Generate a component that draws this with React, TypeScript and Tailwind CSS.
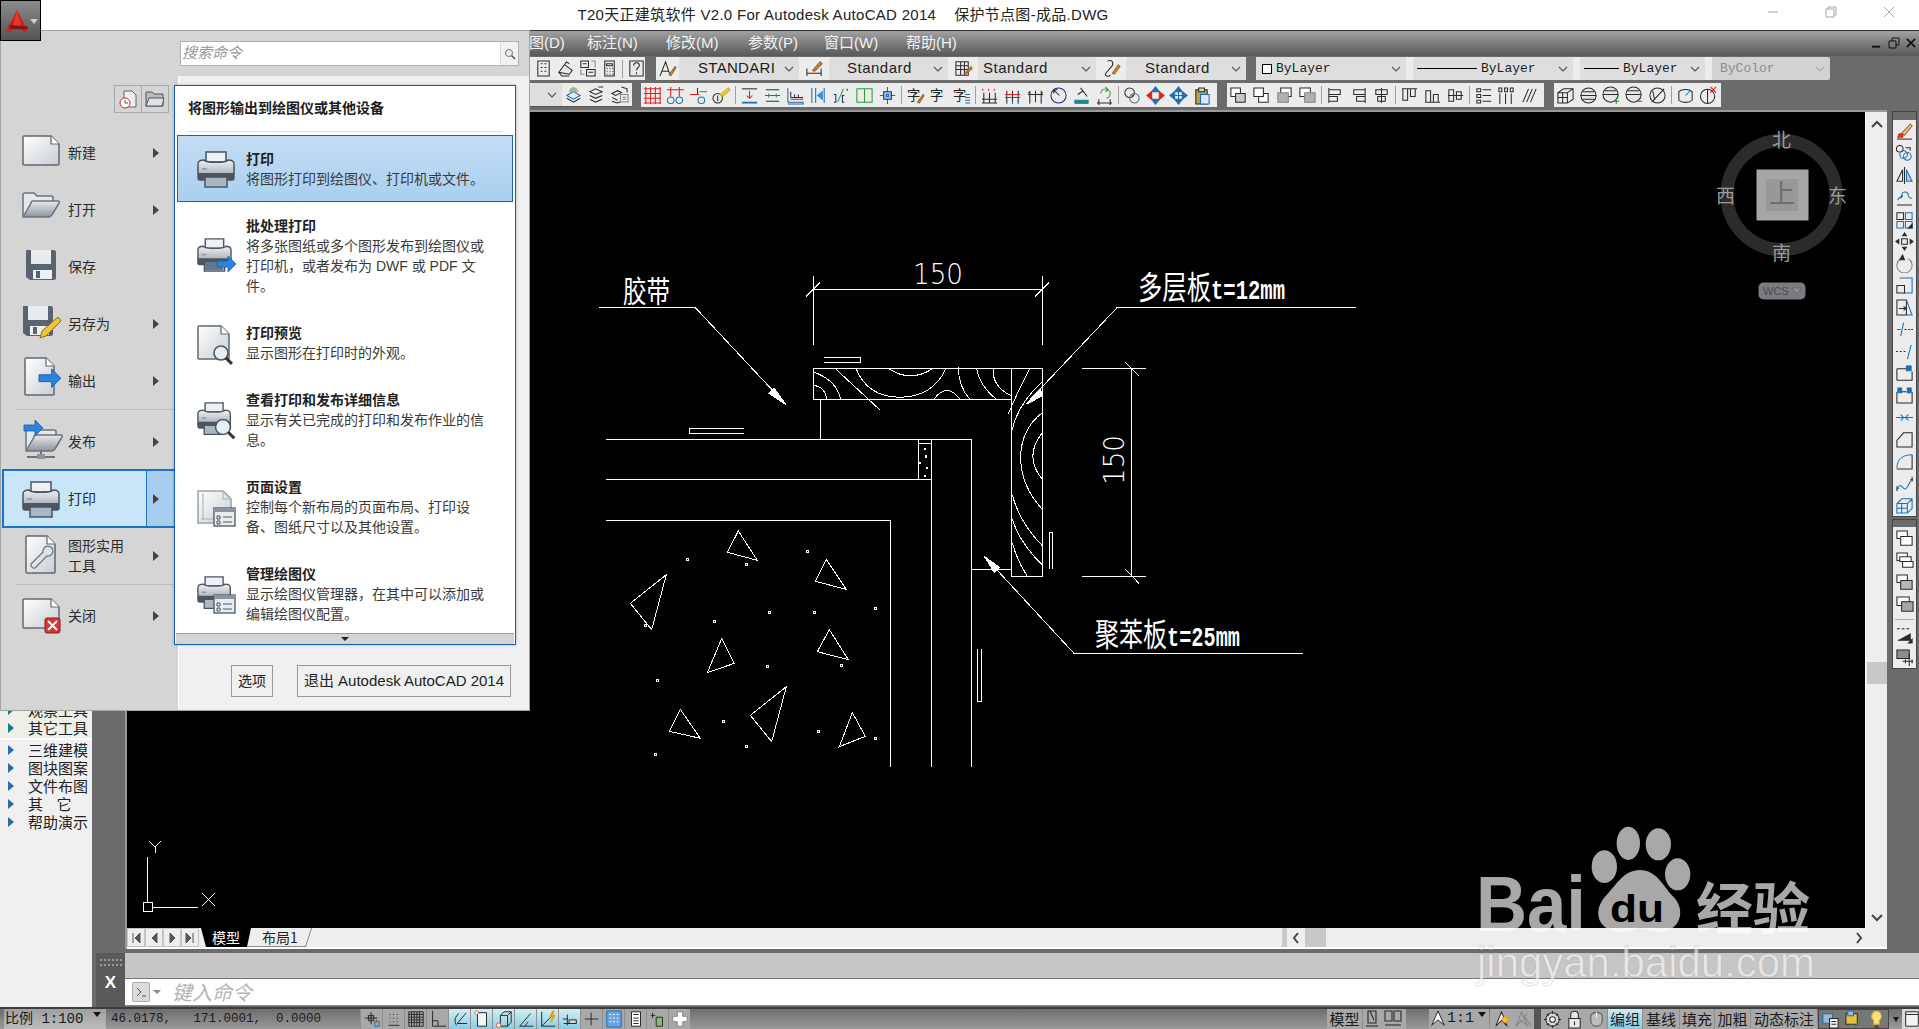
import type { ReactNode } from 'react'

type Part = [string, string, string?]
type Ico = { p: Part[]; t?: string }

const K = '#2b2b2b'
const B = '#1b6fb5'
const R = '#e0201b'
const G = '#2a9a3a'
const Y = '#d9a520'
const S = '#7d8790'

const c = (x: number, y: number, r: number) =>
  `M${x - r} ${y}a${r} ${r} 0 1 0 ${2 * r} 0a${r} ${r} 0 1 0 ${-2 * r} 0`

const icons: Record<string, Ico> = {
  keys: { p: [[K, 'M4 2h12v16H4zM7 5h2M11 5h2M7 9h2M11 9h2M7 13h2M11 13h2']] },
  stamp: { p: [[K, 'M3 14l6-8 8 6-3 4zM3 14l3 4h8M9 6l2-3 3 2']] },
  forms: { p: [[K, 'M3 2h8v7H3zM5 5h4M9 11h9v7H9zM11 14h5'], [S, 'M3 11v5h4M14 2h4v7']] },
  calc: { p: [[K, 'M5 2h10v16H5zM7 5h6v2H7zM7 10h1M10 10h1M13 10h1M7 13h1M10 13h1M13 13h1M7 16h1M10 16h1M13 16h1']] },
  help: { p: [[K, 'M3 2h14v16H3zM7 7c0-4 6-4 6 0 0 2-3 2-3 5M10 14v2']] },
  textStyle: { p: [[K, 'M2 18L8 3l5 15M4 13h7'], ['#a0662a', 'M12 16l6-8 1 1-5 8z', '#c98a3d']] },
  dimStyle: { p: [[K, 'M2 10v8M17 10v8M2 15h15'], ['#a0662a', 'M8 12l8-9 2 2-8 8z', '#c98a3d']] },
  tableStyle: { p: [[K, 'M2 3h13v14H2zM2 7h13M2 11h13M7 3v14M11 3v14'], ['#a0662a', 'M11 15l7-7 1 2-7 6z', '#c98a3d']] },
  mlStyle: { p: [[K, 'M6 2c6-2 7 4 3 7l-5 6c-2 3 3 4 5 2'], ['#a0662a', 'M11 15l6-9 2 2-6 8z', '#c98a3d']] },
  layers: { p: [[B, 'M3 11l7-4 7 4-7 4z'], [K, 'M3 14l7 4 7-4'], [Y, 'M6 7a4 4 0 1 1 8 0z', '#8fb5d8']] },
  stack1: { p: [[K, 'M3 7l6-3 7 3-7 3zM3 11l6 3 7-3M3 15l6 3 7-3M12 2h5']] },
  stack2: { p: [[K, 'M2 9l6-3 4 2-6 3zM2 13l6 3M2 17l6 2 3-1M12 2l6 2v4'], [S, 'M11 10h8v8h-8zM13 13h4M13 15h4']] },
  grid: { p: [[R, 'M1 3h18M1 8h18M1 13h18M1 18h18M3 1v18M8 1v18M13 1v18M18 1v18']] },
  tees: { p: [[R, 'M1 4h18M5 1v10M14 1v10'], [B, c(5, 15, 3.5)], [B, c(14, 15, 3.5)]] },
  tee: { p: [[K, 'M9 2v7'], [R, 'M1 9h10'], [G, 'M11 6h8'], [B, c(13, 15, 3.5)]] },
  numPen: { p: [[K, c(6, 13, 5)], [K, 'M6 10v6'], [Y, 'M9 9l8-7 2 2-8 7z', '#f2d24b']] },
  beamIns: { p: [[K, 'M2 3h16', K], [R, 'M10 5v8M7 10l3 3 3-3'], [B, 'M2 17h16M2 18h16']] },
  beamEq: { p: [['#16307a', 'M3 4h14M3 16h14'], [R, 'M2 10h16'], [G, 'M6 8v4M14 8v4']] },
  stair: { p: [[B, 'M2 2v15h16v2H2'], [K, 'M5 12h13M5 12V6M9 9v3M13 9v3'], [R, 'M5 14h13']] },
  colArrow: { p: [[B, 'M3 2v16M7 2v16M16 2v16'], ['#3a8fd8', 'M9 10l5-4v8z', '#3a8fd8']] },
  bracket: { p: [['#16307a', 'M2 9h2v8H2M13 10h-2v7h2'], [G, 'M6 17L12 3'], [K, 'M16 3v2']] },
  splitBox: { p: [[G, 'M2 3h16v14H2zM10 3v14']] },
  crossBox: { p: [[R, 'M10 1v18M2 10h16'], ['#16307a', 'M6 6h8v8H6z', '#a9bfe0'], [B, 'M9 9h2v2H9z']] },
  zipen: { t: '字', p: [['#a0662a', 'M12 17l6-8 1 1-5 8z', '#c98a3d']] },
  zi: { t: '字', p: [] },
  ziLines: { t: '字', p: [[B, 'M14 9h5M14 12h5M14 15h5M14 18h5']] },
  tick1: { p: [[R, 'M3 3v2M9 3v2M15 3v2'], [K, 'M2 18h16M4 7v11M10 7v11M16 7v11M2 14h16']] },
  tick2: { p: [[K, 'M4 5v12M10 5v12M16 5v12'], [R, 'M2 9h16M2 12h16'], [B, 'M4 16v3M10 16v3M16 16v3']] },
  tick3: { p: [[K, 'M4 5v12M10 5v12M16 5v12M2 9h16M2 7h2M16 7h2'], [B, 'M4 16v3M16 16v3']] },
  clock: { p: [['#16307a', c(10, 10, 8)], [K, 'M5 4l6 6M5 4h4M5 4v4']] },
  scope: { p: [[K, 'M9 2l7 9M6 9l6-4M3 18h14'], ['#1a8a8a', 'M3 15h14v3H3z', '#1a8a8a']] },
  swap: { p: [[G, 'M6 8a5 5 0 1 1 6 5M11 1l3 3-3 2'], [K, 'M2 18h16M4 14v6M16 14v6']] },
  chain: { p: [[K, c(7, 7, 5)], ['#58707f', c(12, 13, 5)], [B, 'M9 9l2 2']] },
  moveRed: { p: [[B, 'M10 1l-4 5h8zM10 19l-4-5h8z', B], [R, 'M1 10l5-4v8zM19 10l-5-4v8z', R]] },
  moveBlue: { p: [[B, 'M10 1l-4 5h8zM10 19l-4-5h8zM1 10l5-4v8zM19 10l-5-4v8zM10 5v10M5 10h10', B]] },
  clip: { p: [[K, 'M4 4h12v15H4z', '#b6a24a'], [K, 'M7 2h6v4H7z', '#d8d8c0'], [B, 'M9 9h9v10H9z', '#dfe8f4']] },
  ord1: { p: [[K, 'M2 2h10v9H2z', '#fff'], [K, 'M7 8h10v9H7z', '#c8c8c8']] },
  ord2: { p: [[K, 'M7 8h10v9H7z', '#fff'], [K, 'M2 2h10v9H2z', '#fff']] },
  ord3: { p: [[K, 'M6 2h11v9H6z', '#fff'], [S, 'M3 7h11v10H3z', '#b0b0b0']] },
  ord4: { p: [[K, 'M2 2h11v9H2z', '#fff'], [S, 'M7 7h11v10H7z', '#b0b0b0']] },
  al1: { p: [[K, 'M3 2v16M3 4h12v5H3M3 11h9v5H3']] },
  al2: { p: [[K, 'M17 2v16M17 4H5v5h12M17 11H8v5h9']] },
  al3: { p: [[K, 'M10 2v16M4 4h12v5H4zM6 11h8v5H6z']] },
  al4: { p: [[K, 'M2 3h16M3 3v12h5V3M11 3v8h5V3']] },
  al5: { p: [[K, 'M2 17h16M3 17V5h5v12M11 17V9h5v8']] },
  al6: { p: [[K, 'M2 10h16M3 4h5v12H3zM11 6h5v8h-5z']] },
  dist1: { p: [[K, 'M3 3h4v3H3zM3 9h4v3H3zM3 15h4v3H3zM9 4h9M9 10h9M9 16h9']] },
  dist2: { p: [[K, 'M2 2h3v4H2zM8 2h3v4H8zM14 2h3v4h-3zM3 8v11M9 8v11M15 8v11']] },
  slash: { p: [[K, 'M3 17L9 3M7 17l6-14M11 17l6-14']] },
  cube: { p: [[K, 'M2 7l6-4h10v11l-6 4H2zM2 7h10v11M12 7l6-4M7 7v11M2 12h10']] },
  sph: { p: [[K, c(10, 10, 8), '#e6e6e6'], [K, 'M2 10h16M4 6h12M4 14h12']] },
  sphP: { p: [[K, c(9, 9, 8), '#e6e6e6'], [K, 'M1 9h16M3 5h12'], [G, 'M15 13v6M12 16h6']] },
  sphM: { p: [[K, c(9, 9, 8), '#e6e6e6'], [K, 'M1 9h16M3 5h12'], [R, 'M12 16h6']] },
  sphS: { p: [[K, c(10, 10, 8)], [K, 'M4 17L17 3M5 5l2 10']] },
  cyl: { p: [[K, 'M3 6c3-3 11-3 14 0v9c-3 3-11 3-14 0z'], [B, 'M10 10l5-5']] },
  cylX: { p: [[K, c(9, 11, 7.5)], [K, 'M9 4v15'], [R, 'M12 1l6 6M18 1l-6 6']] },
  brush: { p: [['#a0662a', 'M7 12l9-10 2 2-8 10z', '#e9c48a'], [R, 'M4 13c3-2 5 0 4 3H3z', '#d2491c'], [K, 'M2 18h16']] },
  copyObj: { p: [[K, c(5, 5, 3.5)], [B, c(13, 13, 4)], [B, c(9, 11, 4)], [K, 'M11 4h5v3']] },
  mirror: { p: [[K, 'M10 1v18M8 16H2L8 4z'], [B, 'M12 16h6L12 4z', '#a9cdef']] },
  offset: { p: [[B, 'M3 13c0-4 4-2 4-5 0-5 7-5 7 0 0 3 3 2 4 3'], [K, 'M2 18h16M6 11c0-3 2-1 2-3']] },
  array: { p: [[K, 'M2 3h7v7H2z'], [B, 'M11 3h7v7h-7zM2 12h7v7H2zM11 12h7v7h-7z'], [K, 'M14 19l4-4v4z', K]] },
  move4: { p: [[K, 'M10 1l-2 3h4zM10 19l-2-3h4zM1 10l3-2v4zM19 10l-3-2v4z', K], [K, 'M7 7h6v6H7z']] },
  rotate: { p: [[S, 'M6 5a8 8 0 1 0 8 0'], [K, 'M8 1l2 5-5 0z', K]] },
  scale: { p: [[B, 'M5 2h13v16H10'], [K, 'M2 10h8v8H2z']] },
  stretch: { p: [[K, 'M2 2h10v16H2zM4 11h8M9 9l3 2-3 2'], [B, 'M12 2l6 16h-6']] },
  trim: { p: [[B, 'M2 10h4M9 3L6 17'], [K, 'M10 10h2M14 10h2M17 10h2']] },
  extend: { p: [[K, 'M1 10h2M5 10h2M9 10h2'], [B, 'M17 3l-4 15']] },
  brk1: { p: [[K, 'M2 5h12M2 5v12M2 17h16V8'], [B, 'M12 2h5v5h-5z', B]] },
  brk2: { p: [[K, 'M2 6v12h16V6M7 6h5'], [B, 'M3 2h4v5H3zM13 2h4v5h-4z', B]] },
  join: { p: [[B, 'M1 10h18M6 7l3 3-3 3M14 7l-3 3 3 3']] },
  chamfer: { p: [[K, 'M2 18h16V3H9l-7 8z']] },
  fillet: { p: [[B, 'M2 17C2 8 8 3 18 3'], [K, 'M2 18h16V3']] },
  spline: { p: [[K, 'M2 13v5M18 3v5M2 15h2M16 6h3'], [B, 'M3 15c3-8 6 4 9 0s3-6 5-8']] },
  solid: { p: [[B, 'M2 8l5-5h11v10l-5 5H2zM2 8h11v10M13 8l5-5M7 8v10M2 13h11']] },
  win1: { p: [[K, 'M2 2h11v8H2z', '#fff'], [K, 'M6 8h12v9H6z', '#fff']] },
  win2: { p: [[K, 'M2 2h11v8H2z', '#fff'], [K, 'M5 6h12v5H5z', '#fff'], [K, 'M8 11h11v6H8z', '#fff']] },
  win3: { p: [[K, 'M2 2h11v8H2z', '#fff'], [K, 'M6 8h12v9H6z', '#b7b7b7']] },
  win4: { p: [[K, 'M2 2h13v9H2z', '#fff'], [K, 'M7 7h12v10H7z', '#a6a6a6']] },
  abc: { p: [[K, 'M2 3h3M7 3h3M12 3h3'], [K, 'M3 15h13v-7M14 18l4-4v4z', K]] },
  ruler: { p: [[K, 'M2 2h13v9H2z', '#8e8e8e'], [K, 'M8 14h11M15 6v13M11 12v4M18 12v4']] },
  snap: { p: [[K, 'M9 2v14M2 9h14M6 6h6v6H6z', '#8a8a8a'], [B, 'M13 13h5v5h-5z'], [R, 'M15 11v2']] },
  dots: { p: [[K, 'M5 5h1M9 5h1M13 5h1M5 9h1M9 9h1M13 9h1M5 13h1M9 13h1M13 13h1M4 17h12']] },
  hatch: { p: [[K, 'M2 2h16v16H2zM2 5h16M2 8h16M2 11h16M2 14h16M5 2v16M8 2v16M11 2v16M14 2v16']] },
  ortho: { p: [[K, 'M4 1v17h15M4 12h6v6']] },
  polar: { p: [[K, 'M6 17a9 9 0 0 1 3-13M17 3L7 15h11']] },
  isoA: { p: [[K, 'M5 3h10v15H5z', '#f4f4f4'], ['#e2662a', c(4, 3, 2), '#fff']] },
  isoB: { p: [[K, 'M6 6l4-4h8v12l-4 4H6zM6 6h8v12M14 6l4-4'], ['#e2662a', c(4, 17, 2.5), '#fff']] },
  ang: { p: [[K, 'M3 18h15M3 18L15 4M9 18l3-5']] },
  lightning: { p: [[K, 'M3 2v16h15M3 18L14 7'], [Y, 'M15 1l-3 7h3l-2 6 5-8h-3l2-5z', Y]] },
  plusT: { p: [[K, 'M7 5v12M2 10h6M3 15h14'], [K, 'M9 11h8v4H9z', '#dcdcdc']] },
  plusB: { p: [[K, 'M9 3v14M2 10h15', K]] },
  screen: { p: [[B, 'M2 1h16v18H2z', '#6aa3e0'], ['#ffffff', 'M5 5h2M9 5h2M13 5h2M5 9h2M9 9h2M13 9h2M5 13h2M9 13h2M13 13h2']] },
  calcS: { p: [[K, 'M5 2h10v16H5z', '#fff'], [K, 'M7 5h6M7 9h6M7 12h6M7 15h6']] },
  sel: { p: [[K, 'M2 6h5M4 3v6'], [K, 'M8 8h7v10H8z', '#7fbf6a']] },
  plusL: { p: [[S, 'M7 2h6v5h5v6h-5v5H7v-5H2V7h5z', '#fff']] },
  paper: { p: [[K, 'M5 2l8 0v12H5zM7 2l4 9'], [K, 'M3 17h12', K]] },
  twoVp: { p: [[K, 'M2 2h7v10H2zM11 2h7v10h-7z'], [K, 'M2 16h16', K]] },
  anno1: { p: [[K, 'M10 2l-6 15 6-6 6 6z', '#fff'], ['#e89a1a', c(14, 10, 3), '#f4c430']] },
  anno2: { p: [[S, 'M8 2l-6 15 6-6 6 6zM14 4l-3 3 7 10']] },
  anno3: { p: [[K, 'M10 1l-7 16 7-6 7 6z', '#fff']] },
  gear: { p: [[K, c(10, 10, 7), '#d8d8d8'], [K, c(10, 10, 3), '#fff'], [K, 'M10 1v3M10 16v3M1 10h3M16 10h3M4 4l2 2M14 14l2 2M16 4l-2 2M4 16l2-2']] },
  lock: { p: [[K, 'M6 9V5c0-5 8-5 8 0v4M4 9h12v10H4zM10 12v4', '#e8e8e8']] },
  mouse: { p: [['#555', 'M4 7c0-6 12-6 12 0v4c0 8-12 8-12 0z', '#bdbdbd'], ['#fff', 'M10 2v6']] },
  tray1: { p: [[B, 'M2 4h10v10H2z', '#9cb8d8'], [K, 'M9 9h9v10H9zM11 12h5M11 15h5', '#eee']] },
  tray2: { p: [[K, 'M2 4h12v11H2z', '#e8c040'], [G, 'M8 15l3 3 7-8'], [B, 'M4 1h6v5H4z', '#9cb8d8']] },
  tray3: { p: [[Y, 'M10 1c-5 0-7 7-3 10v4h6v-4c4-3 2-10-3-10z', '#f6e27a'], [K, 'M8 17h4M8 19h4']] },
  window: { p: [[K, 'M3 2h14v16H3zM3 5h14', '#f4f4f4']] },
}

function Glyph({ name, size = 20 }: { name: string; size?: number }) {
  const ico = icons[name]
  return (
    <svg viewBox="0 0 20 20" width={size} height={size} className="block shrink-0">
      {ico.t && (
        <text x="1" y="15" fontSize="14" fill="#222" fontFamily="'Noto Sans CJK SC',sans-serif">
          {ico.t}
        </text>
      )}
      {ico.p.map((part, i) => (
        <path key={i} d={part[1]} stroke={part[0]} strokeWidth="1.1" fill={part[2] ?? 'none'} />
      ))}
    </svg>
  )
}

function Chevron({ className = 'text-[#555]' }: { className?: string }) {
  return (
    <svg viewBox="0 0 10 6" className={`w-[10px] h-[6px] shrink-0 ${className}`}>
      <path d="M1 1l4 4 4-4" fill="none" stroke="currentColor" strokeWidth="1.1" />
    </svg>
  )
}

// one group of toolbar buttons, "|" is a thin separator
function IconRun({ names, w = 'w-[23px]' }: { names: string[]; w?: string }) {
  return (
    <>
      {names.map((n, i) =>
        n === '|' ? (
          <span key={i} className="w-px h-[18px] mx-[2px] bg-[#a0a0a0] shrink-0" />
        ) : (
          <span key={i} className={`${w} h-full flex items-center justify-center shrink-0`}>
            <Glyph name={n} size={19} />
          </span>
        ),
      )}
    </>
  )
}

function Gripper({ w }: { w: string }) {
  return <span className={`${w} h-full shrink-0`} />
}

function Combo({ w, children, disabled }: { w: string; children: ReactNode; disabled?: boolean }) {
  return (
    <div
      className={`${w} h-full shrink-0 flex items-center justify-between pr-[5px] rounded-[2px] text-[15px] ${
        disabled ? 'bg-[#d2d2d2] text-[#8d8d8d]' : 'bg-[#dedede] text-[#1c1c1c]'
      }`}
    >
      <div className="flex items-center min-w-0 whitespace-nowrap overflow-hidden">{children}</div>
      <Chevron className={disabled ? 'text-[#aaa]' : 'text-[#555]'} />
    </div>
  )
}

function TitleBar() {
  return (
    <div className="h-[30px] shrink-0 bg-white relative flex items-center justify-center text-[15px] tracking-[0.3px] text-[#222] pr-[233px]">
      <span className="whitespace-pre">T20天正建筑软件 V2.0 For Autodesk AutoCAD 2014    保护节点图-成品.DWG</span>
      <div className="absolute right-[24px] top-[6px] flex gap-[46px] text-[#a8a8a8]">
        <svg viewBox="0 0 12 12" className="w-[12px] h-[12px]">
          <path d="M1 6h10" stroke="currentColor" />
        </svg>
        <svg viewBox="0 0 12 12" className="w-[12px] h-[12px]">
          <path d="M1 3h8v8H1zM3 3V1h8v8H9" stroke="currentColor" fill="none" />
        </svg>
        <svg viewBox="0 0 12 12" className="w-[12px] h-[12px]">
          <path d="M1 1l10 10M11 1L1 11" stroke="currentColor" />
        </svg>
      </div>
    </div>
  )
}

function MenuBar() {
  const items: [string, string][] = [
    ['图(D)', 'w-[58px]'],
    ['标注(N)', 'w-[79px]'],
    ['修改(M)', 'w-[82px]'],
    ['参数(P)', 'w-[76px]'],
    ['窗口(W)', 'w-[82px]'],
    ['帮助(H)', 'w-[70px]'],
  ]
  return (
    <div className="h-[26px] shrink-0 border-t border-[#333] bg-linear-to-b from-[#a2a2a2] to-[#585858] flex items-center pl-[529px] text-[15px] text-[#f2f2f2] relative">
      {items.map(([label, w]) => (
        <span key={label} className={`${w} shrink-0 whitespace-nowrap`}>
          {label}
        </span>
      ))}
      <div className="absolute right-[3px] top-[5px] flex gap-[6px] text-[#111]">
        <svg viewBox="0 0 12 12" className="w-[11px] h-[14px]">
          <path d="M1 10h9" stroke="currentColor" strokeWidth="2" />
        </svg>
        <svg viewBox="0 0 12 12" className="w-[12px] h-[14px]">
          <path d="M1 4h7v7H1zM4 4V1h7v7H8" stroke="currentColor" fill="none" />
        </svg>
        <svg viewBox="0 0 12 12" className="w-[10px] h-[14px]">
          <path d="M1 1l10 10M11 1L1 11" stroke="currentColor" strokeWidth="2" />
        </svg>
      </div>
    </div>
  )
}

function Toolbars() {
  const barCls = 'h-full flex items-center bg-[#ececec] shrink-0'
  return (
    <div className="shrink-0 h-[54px] flex flex-col pt-px bg-[#6b6b6b] font-['Liberation_Sans','Noto_Sans_CJK_SC',sans-serif]">
      <div className="h-[23px] flex pl-[530px]">
        <div className={`${barCls} w-[115px] pl-[2px]`}>
          <IconRun names={['keys', 'stamp', 'forms', 'calc', '|', 'help']} w="w-[22px]" />
        </div>
        <Gripper w="w-[11px]" />
        <div className={`${barCls} w-[590px]`}>
          <IconRun names={['textStyle']} />
          <Combo w="w-[120px]">
            <span className="pl-[19px] tracking-[0.3px]">STANDARI</span>
          </Combo>
          <span className="w-[30px] flex justify-center shrink-0">
            <Glyph name="dimStyle" size={19} />
          </span>
          <Combo w="w-[119px]">
            <span className="pl-[18px] tracking-[0.5px]">Standard</span>
          </Combo>
          <span className="w-[30px] flex justify-center shrink-0">
            <Glyph name="tableStyle" size={19} />
          </span>
          <Combo w="w-[118px]">
            <span className="pl-[5px] tracking-[0.5px]">Standard</span>
          </Combo>
          <span className="w-[30px] flex justify-center shrink-0">
            <Glyph name="mlStyle" size={19} />
          </span>
          <Combo w="w-[120px]">
            <span className="pl-[19px] tracking-[0.5px]">Standard</span>
          </Combo>
        </div>
        <Gripper w="w-[10px]" />
        <div className={`${barCls} w-[572px] gap-[7px] bg-[#cfcfcf]`}>
          <Combo w="w-[150px]">
            <span className="ml-[6px] mr-[4px] w-[10px] h-[10px] border border-black bg-white" />
            <span className="font-['Liberation_Mono'] text-[13px]">ByLayer</span>
          </Combo>
          <Combo w="w-[160px]">
            <span className="ml-[4px] mr-[4px] w-[60px] h-px bg-black" />
            <span className="font-['Liberation_Mono'] text-[13px]">ByLayer</span>
          </Combo>
          <Combo w="w-[125px]">
            <span className="ml-[4px] mr-[4px] w-[35px] h-px bg-black" />
            <span className="font-['Liberation_Mono'] text-[13px]">ByLayer</span>
          </Combo>
          <Combo w="w-[118px]" disabled>
            <span className="pl-[8px] font-['Liberation_Mono'] text-[13px]">ByColor</span>
          </Combo>
        </div>
      </div>
      <div className="h-[24px] mt-[3px] flex pl-[530px]">
        <div className={`${barCls} w-[102px] border-b border-[#555]`}>
          <div className="w-[32px] h-full bg-[#dedede] flex items-center justify-end pr-[5px] shrink-0">
            <Chevron />
          </div>
          <IconRun names={['layers', 'stack1', 'stack2']} />
        </div>
        <Gripper w="w-[9px]" />
        <div className={`${barCls} w-[576px]`}>
          <IconRun
            names={[
              'grid', 'tees', 'tee', 'numPen', '|',
              'beamIns', 'beamEq', 'stair', 'colArrow', 'bracket', 'splitBox', 'crossBox', '|',
              'zipen', 'zi', 'ziLines', '|',
              'tick1', 'tick2', 'tick3', 'clock', 'scope', 'swap', '|',
              'chain', 'moveRed', 'moveBlue', 'clip',
            ]}
          />
        </div>
        <Gripper w="w-[10px]" />
        <div className={`${barCls} w-[317px]`}>
          <IconRun
            names={['ord1', 'ord2', 'ord3', 'ord4', '|', 'al1', 'al2', 'al3', '|', 'al4', 'al5', 'al6', '|', 'dist1', 'dist2', 'slash']}
          />
        </div>
        <Gripper w="w-[10px]" />
        <div className={`${barCls} w-[167px]`}>
          <IconRun names={['cube', 'sph', 'sphP', 'sphM', 'sphS', '|', 'cyl', 'cylX']} />
        </div>
      </div>
    </div>
  )
}

function LeftPanel() {
  const top = ['观察工具', '其它工具']
  const rest = ['三维建模', '图块图案', '文件布图', '其    它', '帮助演示']
  const row = (label: string, color: string) => (
    <div key={label} className="h-[18px] flex items-center text-[15px] text-[#222] whitespace-pre">
      <svg viewBox="0 0 6 10" className="w-[6px] h-[10px] ml-[8px] mr-[14px] shrink-0">
        <path d="M0 0l6 5-6 5z" fill={color} />
      </svg>
      {label}
    </div>
  )
  return (
    <div className="w-[92px] h-full bg-[#f0f0f0] shrink-0 pt-[591px] font-['Noto_Sans_CJK_SC',sans-serif]">
      <div className="pb-px border-b-2 border-[#fafafa] bg-[#eeefe9]">{top.map(t => row(t, '#0f7f7f'))}</div>
      <div className="pt-px">{rest.map(t => row(t, '#2f6aa5'))}</div>
    </div>
  )
}

const Line = ({ d }: { d: string }) => <path d={d} vectorEffect="non-scaling-stroke" />

function Drawing() {
  const tris = [
    '445,153 412,217 502,241',
    '229,284 121,370 185,449',
    '709,238 676,304 769,328',
    '395,476 352,578 433,550',
    '718,449 682,515 775,539',
    '589,620 481,706 545,785',
    '271,688 238,754 331,775',
    '787,698 748,800 826,769',
  ]
  const dots = [
    [292, 238], [469, 255], [652, 214], [168, 436], [373, 424], [538, 397], [673, 397], [856, 385],
    [532, 561], [754, 556], [202, 601], [400, 726], [685, 754], [856, 777], [469, 800], [196, 823],
  ]
  const cad = "'Noto Sans CJK SC',sans-serif"
  const dimFont = "'DejaVu Sans',sans-serif"
  const mono = "'Liberation Mono',monospace"
  return (
    <svg viewBox="127 112 1738 816" className="block w-[1738px] h-[816px] bg-black">
      <g shapeRendering="crispEdges" fill="none" stroke="#fff" strokeWidth="1">
        <g transform="translate(590 240) scale(.33333)">
          <Line d="M27 202H315L587 493" />
          <Line d="M670 108V314M1357 108V314M670 148H1357M648 170L690 127M1335 170L1377 127" />
          <Line d="M670 385H1357V1009H1264V385M670 385V478H1264M691 478V598M48 598H1145V1580M48 718H1024M985 598V718M985 610H1024M1024 598V1580" />
          <Line d="M48 841H902V1580M1145 988H1264" />
          <Line d="M812 354H702M702 368H812V354M462 567H300V581H462" />
          <Line d="M1378 987V877H1388V987" />
          <Line d="M1164 1227V1385H1175V1227" />
          <Line d="M670 396Q740 420 752 478M670 436Q705 440 710 478M735 385L870 510" />
          <Line d="M798 385Q830 470 930 472Q1030 470 1068 385M895 385Q960 430 1030 385M1032 478Q1070 425 1110 478" />
          <Line d="M1105 380Q1105 440 1140 478M1160 385Q1170 440 1220 478M1210 385Q1205 440 1265 468" />
          <Line d="M1320 385Q1285 450 1255 522M1357 425Q1285 490 1266 570M1357 518Q1290 570 1292 660Q1295 740 1357 808M1357 578Q1300 650 1357 718" />
          <Line d="M1267 765Q1290 850 1357 917M1267 838Q1290 910 1357 975M1267 908Q1280 960 1312 1009" />
          <Line d="M2298 202H1582L1308 492M2138 1240H1452L1183 949" />
          <Line d="M1476 385H1667M1476 1009H1667M1625 385V1009M1605 366L1647 408M1605 987L1647 1030" />
          <path d="M587 493L537 460L553 445ZM1310 493L1352 445L1355 468ZM1183 949L1228 982L1213 998Z" fill="#fff" vectorEffect="non-scaling-stroke" />
          <Line d="M1003 626h4v4h-4zM1007 648h4v4h-4zM988 669h4v3h-4zM1010 683h4v4h-4zM1003 707h4v4h-4z" />
        </g>
        <g transform="translate(590 480) scale(.33333)">
          {tris.map(t => (
            <polygon key={t} points={t} vectorEffect="non-scaling-stroke" />
          ))}
          {dots.map(([x, y]) => (
            <rect key={`${x}-${y}`} x={x - 3} y={y - 3} width="6" height="6" vectorEffect="non-scaling-stroke" />
          ))}
        </g>
        <path d="M147.5 857V902M153 907.5H198M143.5 902.5h9v9h-9zM149 841l6 6 6-6M155.5 847v6M202 893l13 13M215 893l-13 13" />
      </g>
      <g fill="#fff">
        <text x="623" y="302" fontSize="30" fontFamily={cad} textLength="47" lengthAdjust="spacingAndGlyphs">胶带</text>
        <text x="1138" y="299" fontSize="32" fontFamily={cad} textLength="147" lengthAdjust="spacingAndGlyphs">
          多层板<tspan fontSize="27" fontWeight="bold" fontFamily={mono}>t=12mm</tspan>
        </text>
        <text x="1095" y="646" fontSize="32" fontFamily={cad} textLength="145" lengthAdjust="spacingAndGlyphs">
          聚苯板<tspan fontSize="27" fontWeight="bold" fontFamily={mono}>t=25mm</tspan>
        </text>
        <text x="913" y="284" fontSize="29" fontWeight="200" fontFamily={dimFont} textLength="50" lengthAdjust="spacingAndGlyphs">150</text>
        <text x="0" y="0" transform="translate(1124 485) rotate(-90)" fontSize="29" fontWeight="200" fontFamily={dimFont} textLength="50" lengthAdjust="spacingAndGlyphs">150</text>
      </g>
      {/* viewcube */}
      <circle cx="1781.5" cy="195" r="54.5" fill="none" stroke="#2b2b2b" strokeWidth="13" />
      <rect x="1756.5" y="169.5" width="52" height="51" fill="#a6a6a6" />
      <rect x="1766" y="179" width="32" height="32" fill="#989898" />
      <text x="1782" y="203" textAnchor="middle" fontSize="26" fill="#6e6e6e" fontFamily={cad}>上</text>
      <g fontSize="19" fill="#9a9a9a" fontFamily={cad} textAnchor="middle">
        <text x="1781.5" y="147">北</text>
        <text x="1781.5" y="260">南</text>
        <text x="1725.5" y="203">西</text>
        <text x="1837.5" y="203">东</text>
      </g>
      <rect x="1758.5" y="282.5" width="47" height="17" rx="5" fill="#7b7b82" />
      <text x="1763" y="295" fontSize="11" fill="#4c4c4c" fontFamily="'Liberation Sans',sans-serif">WCS</text>
      <path d="M1792 288h9l-4.500 6z" fill="#8f8f96" stroke="#58585e" strokeWidth=".6" />
    </svg>
  )
}

function NavBtn({ d }: { d: string }) {
  return (
    <span className="w-[18px] h-[19px] border border-[#c4c4c4] flex items-center justify-center shrink-0">
      <svg viewBox="0 0 10 12" className="w-[10px] h-[12px]">
        <path d={d} fill="#555" stroke="#555" />
      </svg>
    </span>
  )
}

function TabsBar() {
  return (
    <div className="h-[21px] shrink-0 bg-[#eeeeee] border-b-2 border-white flex items-center text-[14px] font-['Noto_Sans_CJK_SC',sans-serif]">
      <NavBtn d="M2 1v10M9 1L4 6l5 5z" />
      <NavBtn d="M8 1L3 6l5 5z" />
      <NavBtn d="M3 1l5 5-5 5z" />
      <NavBtn d="M8 1v10M1 1l5 5-5 5z" />
      <span className="ml-[2px] w-[50px] h-[19px] bg-black text-white flex items-center justify-center [clip-path:polygon(0_0,100%_0,92%_100%,10%_100%)] shrink-0">
        模型
      </span>
      <span className="w-[58px] h-[19px] border-b border-r border-[#888] text-[#222] flex items-center justify-center skew-x-[-18deg] shrink-0">
        <span className="skew-x-[18deg]">布局1</span>
      </span>
      <div className="flex-1" />
      <span className="w-[5px] h-[19px] bg-[#c8c8c8]" />
      <span className="w-[18px] flex justify-center">
        <svg viewBox="0 0 8 12" className="w-[8px] h-[12px]">
          <path d="M6 1L2 6l4 5" fill="none" stroke="#444" strokeWidth="2" />
        </svg>
      </span>
      <span className="w-[21px] h-[19px] bg-[#c8c8c8]" />
      <div className="w-[529px]" />
      <span className="w-[32px]">
        <svg viewBox="0 0 8 12" className="w-[8px] h-[12px]">
          <path d="M2 1l4 5-4 5" fill="none" stroke="#444" strokeWidth="2" />
        </svg>
      </span>
    </div>
  )
}

function RightScroll() {
  return (
    <div className="w-[22px] h-[816px] shrink-0 bg-[#eeeeee] flex flex-col items-center pt-[8px] border-l border-[#f8f8f8]">
      <svg viewBox="0 0 12 8" className="w-[12px] h-[8px]">
        <path d="M1 7l5-5 5 5" fill="none" stroke="#444" strokeWidth="2" />
      </svg>
      <div className="mt-[534px] w-[20px] h-[22px] bg-[#c8c8c8]" />
      <div className="flex-1" />
      <svg viewBox="0 0 12 8" className="w-[12px] h-[8px] mb-[6px]">
        <path d="M1 1l5 5 5-5" fill="none" stroke="#444" strokeWidth="2" />
      </svg>
    </div>
  )
}

function ToolColumn() {
  const main = [
    'brush', 'copyObj', 'mirror', 'offset', 'array', 'move4', 'rotate', 'scale', 'stretch',
    'trim', 'extend', 'brk1', 'brk2', 'join', 'chamfer', 'fillet', 'spline', 'solid',
  ]
  const extra = ['win1', 'win2', 'win3', 'win4']
  const cell = (n: string) => (
    <span key={n} className="h-[22px] flex items-center justify-center">
      <Glyph name={n} size={19} />
    </span>
  )
  return (
    <div className="w-[25px] ml-[5px] shrink-0 pt-px">
      <div className="border border-[#444] bg-[#ececec]">
        <div className="h-[8px] bg-[#6b6b6b]" />
        {main.map(cell)}
      </div>
      <div className="mt-[2px] border border-[#444] bg-[#ececec]">
        <div className="h-[7px] bg-[#6b6b6b]" />
        {extra.map(cell)}
        <div className="h-px bg-[#aaa] my-[4px] mx-[2px]" />
        {cell('abc')}
        {cell('ruler')}
      </div>
    </div>
  )
}

function CommandLine() {
  return (
    <div className="h-[57px] shrink-0 mt-[4px] flex pl-[4px]">
      <div className="w-[29px] bg-[#5a5a5a] flex flex-col items-center pt-[6px] shrink-0">
        <div className="w-[22px] h-[7px] border-y-2 border-dotted border-[#999]" />
        <span className="mt-[8px] text-[17px] leading-none font-bold text-white font-['Liberation_Sans']">X</span>
      </div>
      <div className="flex-1 flex flex-col">
        <div className="h-[26px] bg-[#c6c6c6] border-b border-[#777]" />
        <div className="h-[27px] bg-white border-b border-[#888] flex items-center pl-[7px]">
          <span className="w-[18px] h-[20px] rounded-[2px] border border-[#aaa] bg-[#dcdcdc] flex items-center justify-center text-[#555]">
            <svg viewBox="0 0 12 12" className="w-[12px] h-[12px]">
              <path d="M2 2l4 4-4 4M7 10h4" fill="none" stroke="currentColor" />
            </svg>
          </span>
          <svg viewBox="0 0 8 6" className="w-[8px] h-[6px] ml-[3px]">
            <path d="M0 1h8L4 5z" fill="#888" />
          </svg>
          <span className="ml-[11px] italic text-[20px] text-[#b4b4b4] font-['Noto_Sans_CJK_SC',sans-serif]">键入命令</span>
        </div>
      </div>
    </div>
  )
}

function StatusBar() {
  const left = ['snap', 'dots', 'hatch', 'ortho', 'polar', 'isoA', 'isoB', 'ang', 'lightning', 'plusT', 'plusB', 'screen', 'calcS', 'sel', 'plusL']
  const lit = ['polar', 'isoA', 'isoB', 'ang', 'lightning', 'plusT']
  const words = [
    ['编组', 'w-[35px] bg-linear-to-b from-[#c8ecf6] to-[#8ccbe0]'],
    ['基线', 'w-[37px]'],
    ['填充', 'w-[35px]'],
    ['加粗', 'w-[36px]'],
    ['动态标注', 'w-[67px]'],
  ]
  return (
    <div className="h-[22px] shrink-0 border-t-2 border-[#3d3d3d] bg-linear-to-b from-[#6e6e6e] to-[#9a9a9a] flex items-stretch text-[14px] text-[#1a1a1a] font-['Noto_Sans_CJK_SC',sans-serif] overflow-hidden">
      <div className="w-[102px] ml-[4px] shrink-0 bg-linear-to-b from-[#a0a0a0] to-[#bbb] flex items-center pl-px font-['Liberation_Mono','Noto_Sans_CJK_SC',monospace] text-[14px] relative whitespace-pre">
        比例 1:100
        <svg viewBox="0 0 8 5" className="absolute right-[5px] top-[3px] w-[8px] h-[5px]">
          <path d="M0 0h8L4 5z" fill="#111" />
        </svg>
      </div>
      <div className="w-[254px] shrink-0 pl-[5px] flex items-center whitespace-pre font-['Liberation_Mono',monospace] text-[12.500px]">
        46.0178,   171.0001,  0.0000
      </div>
      <div className="flex w-[330px] shrink-0">
        {left.map(n => (
          <span
            key={n}
            className={`w-[22px] flex items-center justify-center border-l border-[#8f8f8f] ${
              lit.includes(n) ? 'bg-linear-to-b from-[#d4eef6] to-[#8ccbe0]' : 'bg-[#a8a8a8]'
            }`}
          >
            <Glyph name={n} size={18} />
          </span>
        ))}
      </div>
      <div className="w-[637px] shrink-0" />
      <span className="w-[35px] shrink-0 bg-[#a8a8a8] flex items-center justify-center text-[15px]">模型</span>
      <div className="w-[44px] shrink-0 bg-[#a8a8a8] flex items-center border-l border-[#8f8f8f]">
        <Glyph name="paper" size={20} />
        <Glyph name="twoVp" size={20} />
      </div>
      <div className="w-[23px] shrink-0" />
      <div className="w-[60px] shrink-0 bg-[#a8a8a8] flex items-center text-[15px] font-['Liberation_Mono',monospace] relative">
        <Glyph name="anno3" size={18} />
        1:1
        <svg viewBox="0 0 8 5" className="absolute right-[3px] top-[3px] w-[8px] h-[5px]">
          <path d="M0 0h8L4 5z" fill="#111" />
        </svg>
      </div>
      <div className="w-[44px] shrink-0 ml-px bg-[#a8a8a8] flex items-center justify-around">
        <Glyph name="anno1" size={19} />
        <Glyph name="anno2" size={19} />
      </div>
      <div className="w-[7px] shrink-0 bg-[#555]" />
      <div className="w-[66px] shrink-0 bg-[#a8a8a8] flex items-center justify-around">
        <Glyph name="gear" size={19} />
        <Glyph name="lock" size={19} />
        <Glyph name="mouse" size={19} />
      </div>
      {words.map(([label, cls]) => (
        <span key={label} className={`${cls} shrink-0 bg-[#a8a8a8] border-l border-[#8f8f8f] flex items-center justify-center text-[15px]`}>
          {label}
        </span>
      ))}
      <div className="w-[71px] ml-px shrink-0 bg-[#777] border border-[#444] flex items-center justify-around">
        <Glyph name="tray1" size={19} />
        <Glyph name="tray2" size={19} />
        <Glyph name="tray3" size={19} />
      </div>
      <svg viewBox="0 0 6 5" className="w-[6px] h-[5px] ml-[4px] mt-[8px] shrink-0">
        <path d="M0 0h6L3 5z" fill="#111" />
      </svg>
      <span className="ml-[3px] w-[20px] shrink-0 bg-[#d8d8d8] flex items-center justify-center">
        <Glyph name="window" size={18} />
      </span>
    </div>
  )
}

/* ---- application menu pictures ---- */

const OUT = '#4b5662'

const PrinterPic = ({ x = 0, y = 0, s = 1 }: { x?: number; y?: number; s?: number }) => (
  <g transform={`translate(${x} ${y}) scale(${s})`}>
    <path d="M9 1h20v10H9z" fill="#eef1f3" stroke={OUT} strokeWidth="1.5" />
    <path d="M1 13c0-2 2-4 6-4 2 3 22 3 24 0 4 0 6 2 6 4v14c0 1-1 2-2 2H3c-1 0-2-1-2-2z" fill="url(#pbody)" stroke={OUT} strokeWidth="1.5" />
    <path d="M1 22h36v5c0 1-1 2-2 2H3c-1 0-2-1-2-2z" fill={OUT} />
    <path d="M8 26h22v10H8z" fill="#a9b7c0" stroke={OUT} strokeWidth="1.5" />
    <path d="M5 18h5" stroke="#8b96a0" strokeWidth="1.5" />
  </g>
)

const DocPic = ({ w = 38, h = 30 }: { w?: number; h?: number }) => (
  <path
    d={`M1 2c0-1 0-1 1-1h${w - 11}l8 8v${h - 10}c0 1 0 1-1 1H2c-1 0-1 0-1-1z`}
    fill="url(#pdoc)"
    stroke="#5f6972"
    strokeWidth="1.5"
  />
)

const Fold = ({ x }: { x: number }) => <path d={`M${x} 1v8h8`} fill="#fff" stroke="#5f6972" strokeWidth="1.2" />

const FolderPic = () => (
  <g>
    <path d="M1 24V3c0-1 1-2 2-2h9l3 3h14c1 0 2 1 2 2v3" fill="#e6e9ec" stroke="#6a747d" strokeWidth="1.5" />
    <path d="M1 25l8-14c0-1 1-2 2-2h25c1 0 2 1 1 2l-7 12c-1 1-2 2-3 2z" fill="url(#pfold)" stroke="#6a747d" strokeWidth="1.5" />
  </g>
)

const FloppyPic = () => (
  <g>
    <path d="M2 1h27c1 0 2 1 2 2v26c0 1-1 2-2 2H5l-4-3V2c0-1 0-1 1-1z" fill="#5a6470" />
    <path d="M6 1h20v14H6z" fill="#e8ecef" />
    <path d="M8 21h19v9H8z" fill="#eef1f3" />
    <path d="M11 22h4v7h-4z" fill="#5a6470" />
  </g>
)

const BlueArrow = ({ x, y, s = 1 }: { x: number; y: number; s?: number }) => (
  <path
    transform={`translate(${x} ${y}) scale(${s})`}
    d="M0 5h11V0l8 8-8 8v-5H0z"
    fill="#2a83dc"
    stroke="#1a5fa8"
    strokeWidth=".8"
  />
)

const Lens = ({ x, y, r = 7 }: { x: number; y: number; r?: number }) => (
  <g>
    <circle cx={x} cy={y} r={r} fill="#e5f0f6" stroke={OUT} strokeWidth="1.6" />
    <path d={`M${x + r * 0.7} ${y + r * 0.7}l6 6`} stroke="#333" strokeWidth="3" />
  </g>
)

const MiniTable = ({ x, y }: { x: number; y: number }) => (
  <g>
    <rect x={x} y={y} width="21" height="18" fill="#e9edf0" stroke={OUT} strokeWidth="1.3" />
    <rect x={x} y={y} width="21" height="4" fill="#8a949e" />
    <path d={`M${x + 3} ${y + 8}h3v3h-3zM${x + 3} ${y + 13}h3v3h-3zM${x + 9} ${y + 9}h9M${x + 9} ${y + 14}h9`} stroke={OUT} fill="none" />
  </g>
)

const menuPics: Record<string, ReactNode> = {
  new: (
    <>
      <DocPic />
      <Fold x={29} />
    </>
  ),
  open: <FolderPic />,
  save: <g transform="translate(3 0)"><FloppyPic /></g>,
  saveAs: (
    <g transform="translate(0 -1)">
      <FloppyPic />
      <path d="M18 33l2-7 16-14 3 4-15 15z" fill="#f2c230" stroke="#8d6a1a" />
    </g>
  ),
  output: (
    <g transform="translate(2 -6)">
      <DocPic w={31} h={38} />
      <Fold x={22} />
      <BlueArrow x={15} y={12} s={1.15} />
    </g>
  ),
  publish: (
    <g transform="translate(3 2)">
      <FolderPic />
      <BlueArrow x={-1} y={-6} s={1} />
      <path d="M16 25v5M2 31h28" stroke="#6a747d" strokeWidth="2" />
      <rect x="12" y="28" width="8" height="5" fill="#8a949e" />
    </g>
  ),
  print: <PrinterPic />,
  util: (
    <g transform="translate(3 -3)">
      <DocPic w={31} h={38} />
      <Fold x={22} />
      <path d="M6 29l12-12a5 5 0 1 1 4 4L10 33c-2 1-5-2-4-4z" fill="#dfe3e7" stroke="#6a747d" strokeWidth="1.2" />
    </g>
  ),
  close: (
    <>
      <DocPic h={30} />
      <Fold x={29} />
      <rect x="23" y="20" width="15" height="15" rx="2" fill="#d8343a" stroke="#8a1c20" />
      <path d="M26 23l9 9M35 23l-9 9" stroke="#fff" strokeWidth="1.8" />
    </>
  ),
  batch: (
    <>
      <PrinterPic s={0.92} />
      <rect x="8" y="24" width="18" height="8" fill="#5f7a90" />
      <BlueArrow x={20} y={18} s={1} />
    </>
  ),
  preview: (
    <>
      <DocPic w={33} h={34} />
      <Fold x={24} />
      <Lens x={24} y={28} />
    </>
  ),
  detail: (
    <>
      <PrinterPic s={0.9} />
      <Lens x={26} y={25} r={7.5} />
    </>
  ),
  page: (
    <>
      <path d="M1 2h25l8 8v24H1z" fill="url(#pdoc)" stroke="#99a2aa" strokeWidth="1.5" />
      <path d="M26 2v8h8M4 30h26M6 4v26" stroke="#a7afb6" fill="none" />
      <MiniTable x={17} y={19} />
    </>
  ),
  manage: (
    <>
      <PrinterPic s={0.9} />
      <MiniTable x={17} y={19} />
    </>
  ),
}

function Pic({ name, w = 40, h = 38 }: { name: string; w?: number; h?: number }) {
  return (
    <svg viewBox={`-1 -1 ${w} ${h}`} width={w} height={h} className="block overflow-visible shrink-0">
      {menuPics[name]}
    </svg>
  )
}

function Caret() {
  return (
    <svg viewBox="0 0 6 10" className="w-[6px] h-[10px] shrink-0">
      <path d="M0 0l6 5-6 5z" fill="#444" />
    </svg>
  )
}

function MenuRow({ pic, label, active, noArrow }: { pic: string; label: string; active?: boolean; noArrow?: boolean }) {
  return (
    <div
      className={`h-[57px] ml-[2px] w-[172px] flex items-stretch relative ${
        active ? 'outline-2 -outline-offset-1 outline-[#1a73c8]' : ''
      }`}
    >
      <div className={`w-[144px] flex items-center pl-[18px] ${active ? 'bg-[#c8e6f8] border-r border-[#1a73c8]' : ''}`}>
        <span className="w-[47px] flex items-center shrink-0">
          <Pic name={pic} />
        </span>
        <span className="w-[58px] text-[14px] leading-[20px] text-[#2a2a2a]">{label}</span>
      </div>
      <div className={`w-[28px] flex items-center pl-[6px] ${active ? 'bg-[#a9cdef]' : ''}`}>{!noArrow && <Caret />}</div>
    </div>
  )
}

function PrintItem({ pic, title, lines, active }: { pic: string; title: string; lines: string[]; active?: boolean }) {
  return (
    <div
      className={`flex items-center py-[12.5px] border shrink-0 ${
        active ? 'bg-linear-to-b from-[#c4dcf3] to-[#a9d0f1] border-[#1a66b4]' : 'border-transparent'
      }`}
    >
      <span className="w-[68px] pl-[18px] shrink-0">
        <Pic name={pic} />
      </span>
      <div className="text-[14px] leading-[20px] text-[#3a3a3a] whitespace-nowrap">
        <div className="font-bold text-[#222]">{title}</div>
        {lines.map(l => (
          <div key={l}>{l}</div>
        ))}
      </div>
    </div>
  )
}

function AppMenu() {
  return (
    <div className="absolute left-0 top-[30px] w-[530px] h-[681px] flex bg-[#d5d5d5] border border-[#a3a3a3] font-['Liberation_Sans','Noto_Sans_CJK_SC',sans-serif]">
      <div className="w-[177px] shrink-0 pt-[54px]">
        <div className="flex justify-end pr-[9px] mb-[11px]">
          <div className="w-[55px] h-[28px] border border-[#aaa] flex divide-x divide-[#aaa]">
            <span className="flex-1 flex items-center justify-center">
              <svg viewBox="0 0 20 20" className="w-[20px] h-[20px]">
                <path d="M6 2h8l4 4v12H6z" fill="#eee" stroke="#666" />
                <circle cx="7" cy="14" r="5" fill="#fff" stroke="#b33" />
                <path d="M7 11v3h3" stroke="#555" fill="none" />
              </svg>
            </span>
            <span className="flex-1 flex items-center justify-center">
              <svg viewBox="0 0 20 18" className="w-[20px] h-[18px]">
                <path d="M1 16V2h6l2 2h9v12z" fill="#b5bcc2" stroke="#555" />
                <path d="M1 16l3-8h15l-2 8z" fill="#dfe3e6" stroke="#555" />
              </svg>
            </span>
          </div>
        </div>
        <MenuRow pic="new" label="新建" />
        <MenuRow pic="open" label="打开" />
        <MenuRow pic="save" label="保存" noArrow />
        <MenuRow pic="saveAs" label="另存为" />
        <MenuRow pic="output" label="输出" />
        <div className="h-px bg-[#bcbcbc] ml-[14px] w-[160px] mb-[3px]" />
        <MenuRow pic="publish" label="发布" />
        <MenuRow pic="print" label="打印" active />
        <MenuRow pic="util" label="图形实用工具" />
        <div className="h-px bg-[#bcbcbc] ml-[14px] w-[160px] mb-[2px]" />
        <MenuRow pic="close" label="关闭" />
      </div>
      <div className="flex-1 flex flex-col min-w-0">
        <div className="h-[45px] shrink-0 pt-[10px] pl-[2px]">
          <div className="w-[339px] h-[25px] border border-[#b0b0b0] bg-white flex items-center">
            <span className="flex-1 pl-[1px] italic text-[15px] text-[#999]">搜索命令</span>
            <span className="w-[18px] h-full border-l border-[#ddd] bg-[#f2f2f2] flex items-center justify-center">
              <svg viewBox="0 0 12 12" className="w-[12px] h-[12px]">
                <circle cx="5" cy="5" r="3.500" fill="#e8eef2" stroke="#777" />
                <path d="M7.500 7.500L11 11" stroke="#555" strokeWidth="1.6" />
              </svg>
            </span>
          </div>
        </div>
        <div className="flex-1 bg-[#f0f0f0] border-l border-white pt-[9px] relative">
          <div className="-ml-[5px] w-[342px] h-[560px] bg-white border border-[#1560ab] shadow-[0_0_3px_rgba(0,0,0,.25)] flex flex-col">
            <div className="mx-[13px] h-[46px] shrink-0 flex items-center border-b border-[#ddd] text-[14px] font-bold text-[#1c1c1c]">
              将图形输出到绘图仪或其他设备
            </div>
            <div className="flex-1 mt-[3px] mx-[2px] overflow-hidden flex flex-col">
              <PrintItem pic="print" title="打印" lines={['将图形打印到绘图仪、打印机或文件。']} active />
              <PrintItem
                pic="batch"
                title="批处理打印"
                lines={['将多张图纸或多个图形发布到绘图仪或', '打印机，或者发布为 DWF 或 PDF 文', '件。']}
              />
              <PrintItem pic="preview" title="打印预览" lines={['显示图形在打印时的外观。']} />
              <PrintItem
                pic="detail"
                title="查看打印和发布详细信息"
                lines={['显示有关已完成的打印和发布作业的信', '息。']}
              />
              <PrintItem pic="page" title="页面设置" lines={['控制每个新布局的页面布局、打印设', '备、图纸尺寸以及其他设置。']} />
              <PrintItem pic="manage" title="管理绘图仪" lines={['显示绘图仪管理器，在其中可以添加或', '编辑绘图仪配置。']} />
            </div>
            <div className="h-[11px] mx-px shrink-0 bg-[#d4d4d4] border-t border-[#999] flex items-center justify-center">
              <svg viewBox="0 0 8 4" className="w-[8px] h-[4px]">
                <path d="M0 0h8L4 4z" fill="#222" />
              </svg>
            </div>
          </div>
          <div className="flex mt-[20px] text-[14px] text-[#222]">
            <span className="ml-[52px] w-[42px] h-[32px] border border-[#999] flex items-center justify-center">选项</span>
            <span className="ml-[24px] w-[214px] h-[32px] border border-[#999] flex items-center justify-center whitespace-nowrap text-[15px]">
              退出 Autodesk AutoCAD 2014
            </span>
          </div>
        </div>
      </div>
    </div>
  )
}

function AppButton() {
  return (
    <div className="absolute left-0 top-0 w-[41px] h-[41px] border border-black bg-linear-to-b from-[#8c8c8c] to-[#555] flex items-center pl-[4px] gap-[1px]">
      <svg viewBox="0 0 26 26" className="w-[24px] h-[26px]">
        <path d="M13 1L25 24l-5 1-2-3H8l-2 3-5-1z" fill="#c8231c" />
        <path d="M13 1L8 22h10z" fill="#e8382e" />
        <path d="M4 17l21 2-1 3H6z" fill="#8c1410" />
      </svg>
      <svg viewBox="0 0 8 5" className="w-[8px] h-[5px] mt-[2px]">
        <path d="M0 0h8L4 5z" fill="#d0d0d0" />
      </svg>
    </div>
  )
}

function Watermark() {
  const mark = 'rgba(255,255,255,.66)'
  return (
    <svg viewBox="1450 810 400 190" className="absolute left-[1450px] top-[810px] w-[400px] h-[190px] pointer-events-none">
      <g fill={mark}>
        <text x="1476" y="931" fontSize="77" fontWeight="bold" fontFamily="'Liberation Sans',sans-serif" textLength="110" lengthAdjust="spacingAndGlyphs">
          Bai
        </text>
        <g transform="translate(1450 810) scale(.33333)">
          <ellipse cx="463" cy="170" rx="38" ry="49" />
          <ellipse cx="535" cy="100" rx="35" ry="50" />
          <ellipse cx="625" cy="103" rx="38" ry="48" />
          <ellipse cx="683" cy="193" rx="38" ry="48" />
          <path d="M570 180C620 180 640 230 670 260C710 300 690 365 630 365C600 365 590 355 570 355C550 355 540 370 500 365C440 355 430 300 465 260C500 225 520 180 570 180Z" />
        </g>
        <text x="1696" y="929" fontSize="56" fontWeight="bold" fontFamily="'Noto Sans CJK SC',sans-serif" textLength="114" lengthAdjust="spacingAndGlyphs">
          经验
        </text>
      </g>
      <text x="1610" y="922" fontSize="38" fontWeight="bold" fontFamily="'Liberation Sans',sans-serif" fill="#000" textLength="54" lengthAdjust="spacingAndGlyphs">
        du
      </text>
      <text
        x="1477"
        y="977"
        fontSize="42"
        fontFamily="'Liberation Sans',sans-serif"
        fill="rgba(255,255,255,.62)"
        stroke="rgba(120,120,120,.22)"
        strokeWidth="1"
        textLength="338"
        lengthAdjust="spacingAndGlyphs"
      >
        jingyan.baidu.com
      </text>
    </svg>
  )
}

export default function App() {
  return (
    <div className="relative w-[1919px] h-[1029px] overflow-hidden bg-[#6b6b6b] flex flex-col font-['Liberation_Sans','Noto_Sans_CJK_SC',sans-serif]">
      <svg className="absolute w-0 h-0">
        <defs>
          <linearGradient id="pbody" x1="0" y1="0" x2="0" y2="1">
            <stop offset="0" stopColor="#f0f2f4" />
            <stop offset="1" stopColor="#8f99a3" />
          </linearGradient>
          <linearGradient id="pdoc" x1="0" y1="0" x2="1" y2="1">
            <stop offset="0" stopColor="#ffffff" />
            <stop offset="1" stopColor="#c9ced3" />
          </linearGradient>
          <linearGradient id="pfold" x1="0" y1="0" x2="0" y2="1">
            <stop offset="0" stopColor="#e8ebee" />
            <stop offset="1" stopColor="#8d959d" />
          </linearGradient>
        </defs>
      </svg>
      <TitleBar />
      <MenuBar />
      <Toolbars />
      <div className="flex-1 flex min-h-0 h-[896px]">
        <LeftPanel />
        <div className="flex-1 min-w-0 flex flex-col">
          <div className="h-[839px] shrink-0 flex">
            <div className="w-[33px] shrink-0" />
            <div className="w-[1762px] shrink-0 border-t-2 border-l-2 border-[#9a9a9a]">
              <div className="flex">
                <Drawing />
                <RightScroll />
              </div>
              <TabsBar />
            </div>
            <ToolColumn />
          </div>
          <CommandLine />
        </div>
      </div>
      <StatusBar />
      <AppMenu />
      <AppButton />
      <Watermark />
    </div>
  )
}
